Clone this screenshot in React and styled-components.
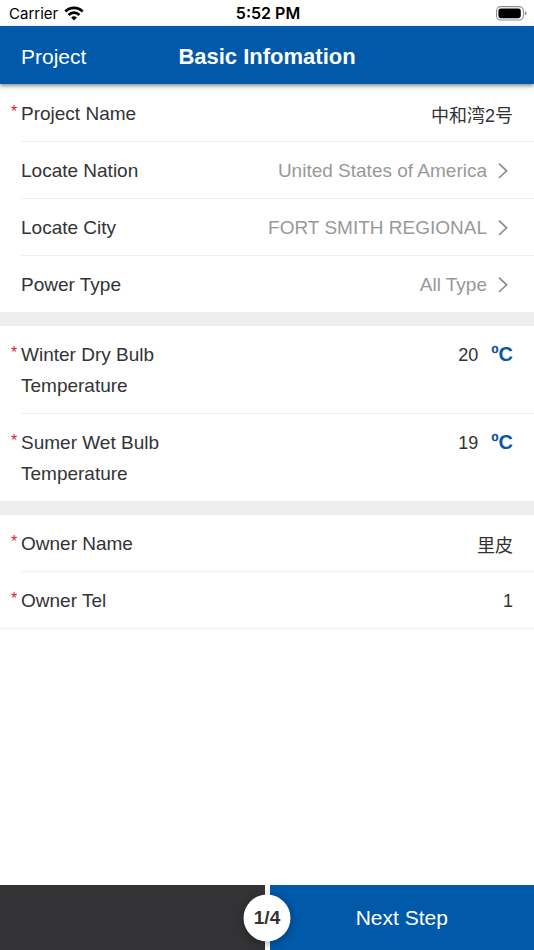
import React, { useState } from 'react';
import styled, { createGlobalStyle } from 'styled-components';

const GlobalStyle = createGlobalStyle`
  * {
    box-sizing: border-box;
  }

  body {
    margin: 0;
    background: #ffffff;
    color: #333335;
    font-family: "Liberation Sans", "Noto Sans CJK SC", sans-serif;
  }

  button, input, select {
    font-family: inherit;
    color: inherit;
    border: none;
    border-radius: 0;
    background: transparent;
    padding: 0;
    margin: 0;
  }
`;

const nations = ['United States of America', 'China', 'Germany'];
const cities = ['FORT SMITH REGIONAL', 'LITTLE ROCK', 'FAYETTEVILLE'];
const powerTypes = ['All Type', '50Hz', '60Hz'];

function WifiIcon() {
  return (
    <svg width="20" height="15" viewBox="0 0 20 15" aria-hidden="true">
      <g fill="none" stroke="#000000" strokeWidth="2.8">
        <path d="M1.4 5.4a12.2 12.2 0 0 1 17.2 0" />
        <path d="M4.6 8.9a7.6 7.6 0 0 1 10.8 0" />
      </g>
      <path d="M10 14.6l-2.9-3a4.1 4.1 0 0 1 5.8 0z" fill="#000000" />
    </svg>
  );
}

function BatteryIcon() {
  return (
    <svg width="31" height="15" viewBox="0 0 31 15" aria-hidden="true">
      <rect x="0.6" y="0.6" width="26.8" height="13.4" rx="4" fill="none" stroke="#8e8e8e" strokeWidth="1.1" />
      <rect x="2.4" y="2.4" width="22.4" height="9.8" rx="2.4" fill="#000000" />
      <path d="M28.9 5.2c1.1.4 1.7 1.2 1.7 2.1s-.6 1.7-1.7 2.1z" fill="#8e8e8e" />
    </svg>
  );
}

function Chevron() {
  return (
    <svg width="12" height="18" viewBox="0 0 12 18" aria-hidden="true">
      <path d="M2 1.6l7.6 7.2L2 16" fill="none" stroke="#8c8c8e" strokeWidth="1.7" />
    </svg>
  );
}

function TextRow({ id, label, value, onChange, unit }) {
  return (
    <Row>
      <Star>*</Star>
      <Label htmlFor={id} $narrow={!!unit}>{label}</Label>
      <Value>
        <Input id={id} value={value} onChange={(e) => onChange(e.target.value)} />
        {unit && <Unit>{unit}</Unit>}
      </Value>
    </Row>
  );
}

function SelectRow({ id, label, options }) {
  return (
    <Row>
      <Star />
      <Label htmlFor={id}>{label}</Label>
      <Value>
        <Select id={id}>
          {options.map((o) => (
            <option key={o}>{o}</option>
          ))}
        </Select>
        <Chevron />
      </Value>
    </Row>
  );
}

export default function App() {
  const [name, setName] = useState('中和湾2号');
  const [winter, setWinter] = useState('20');
  const [summer, setSummer] = useState('19');
  const [owner, setOwner] = useState('里皮');
  const [tel, setTel] = useState('1');

  return (
    <Screen>
      <GlobalStyle />
      <StatusBar>
        <Carrier>
          Carrier
          <WifiIcon />
        </Carrier>
        <Clock>5:52 PM</Clock>
        <Battery>
          <BatteryIcon />
        </Battery>
      </StatusBar>

      <Header>
        <BackButton type="button">Project</BackButton>
        <Title>Basic Infomation</Title>
      </Header>

      <Form>
        <Group>
          <TextRow id="project" label="Project Name" value={name} onChange={setName} />
          <SelectRow id="nation" label="Locate Nation" options={nations} />
          <SelectRow id="city" label="Locate City" options={cities} />
          <SelectRow id="power" label="Power Type" options={powerTypes} />
        </Group>

        <Group>
          <TextRow id="winter" label="Winter Dry Bulb Temperature" value={winter} onChange={setWinter} unit="ºC" />
          <TextRow id="summer" label="Sumer Wet Bulb Temperature" value={summer} onChange={setSummer} unit="ºC" />
        </Group>

        <Group>
          <TextRow id="owner" label="Owner Name" value={owner} onChange={setOwner} />
          <TextRow id="tel" label="Owner Tel" value={tel} onChange={setTel} />
        </Group>
      </Form>

      <Footer>
        <PrevButton type="button" aria-label="Previous step" />
        <NextButton type="button">Next Step</NextButton>
        <Step>1/4</Step>
      </Footer>
    </Screen>
  );
}

const Screen = styled.div`
  min-height: 100vh;
  display: flex;
  flex-direction: column;
`;

const StatusBar = styled.div`
  height: 26px;
  padding: 0 7px 0 9px;
  display: grid;
  grid-template-columns: 1fr auto 1fr;
  align-items: center;
  font-family: Inter, sans-serif;
  font-size: 15px;
  color: #000000;
`;

const Carrier = styled.div`
  display: flex;
  align-items: center;
  gap: 6px;
`;

const Clock = styled.div`
  font-size: 16px;
  font-weight: 600;
`;

const Battery = styled.div`
  display: flex;
  justify-content: flex-end;
`;

const Header = styled.header`
  height: 58px;
  padding: 3px 21px 0;
  display: grid;
  grid-template-columns: 1fr auto 1fr;
  align-items: center;
  background: #0059a9;
  color: #ffffff;
  box-shadow: 0 2px 4px rgba(0, 0, 0, 0.45);
  z-index: 1;
`;

const BackButton = styled.button`
  justify-self: start;
  font-size: 21px;
  cursor: pointer;
`;

const Title = styled.h1`
  margin: 0;
  font-size: 22px;
  font-weight: 700;
`;

const Form = styled.form`
  flex: 1;
  padding-top: 1px;
`;

const Row = styled.div`
  display: flex;
  align-items: flex-start;
  padding-left: 11px;
`;

const Group = styled.section`
  border-bottom: 14px solid #ededed;

  &:last-child {
    border-bottom: 1px solid #f0f0f0;
  }

  ${Row}:not(:last-child) {
    background: linear-gradient(#f0f0f0, #f0f0f0) 21px 100% / 100% 1px no-repeat;
    padding-bottom: 1px;
  }
`;

const Star = styled.span`
  width: 10px;
  padding-top: 13px;
  flex: none;
  font-size: 16px;
  line-height: 28px;
  color: #e0203c;
`;

const Label = styled.label`
  flex: none;
  width: ${(p) => (p.$narrow ? '160px' : 'auto')};
  padding: 13px 0 12px;
  font-size: 19px;
  line-height: 31px;
`;

const Value = styled.div`
  flex: 1;
  min-width: 0;
  padding: 13px 21px 12px 16px;
  display: flex;
  align-items: center;
  justify-content: flex-end;

  svg {
    flex: none;
    margin: 0 4px 0 10px;
  }
`;

const Input = styled.input`
  flex: 1;
  min-width: 0;
  height: 31px;
  padding-top: 1px;
  font-size: 18px;
  text-align: right;
  outline: none;
`;

const Unit = styled.span`
  padding-left: 13px;
  font-size: 20px;
  font-weight: 700;
  line-height: 31px;
  color: #0f55a5;
`;

const Select = styled.select`
  flex: 1;
  min-width: 0;
  height: 31px;
  appearance: none;
  font-size: 19px;
  text-align-last: right;
  color: #98989a;
  outline: none;
`;

const Footer = styled.footer`
  position: relative;
  height: 65px;
  display: grid;
  grid-template-columns: 1fr 1fr;
  gap: 5px;
`;

const PrevButton = styled.button`
  background: #333335;
`;

const NextButton = styled.button`
  background: #0059a9;
  color: #ffffff;
  font-size: 21px;
  cursor: pointer;
`;

// sits over the seam between the two buttons
const Step = styled.div`
  position: absolute;
  top: 50%;
  left: 50%;
  transform: translate(-50%, -50%);
  width: 47px;
  height: 47px;
  border-radius: 50%;
  display: flex;
  align-items: center;
  justify-content: center;
  background: #ffffff;
  box-shadow: 0 2px 8px rgba(0, 0, 0, 0.35);
  font-size: 19px;
  font-weight: 700;
`;
